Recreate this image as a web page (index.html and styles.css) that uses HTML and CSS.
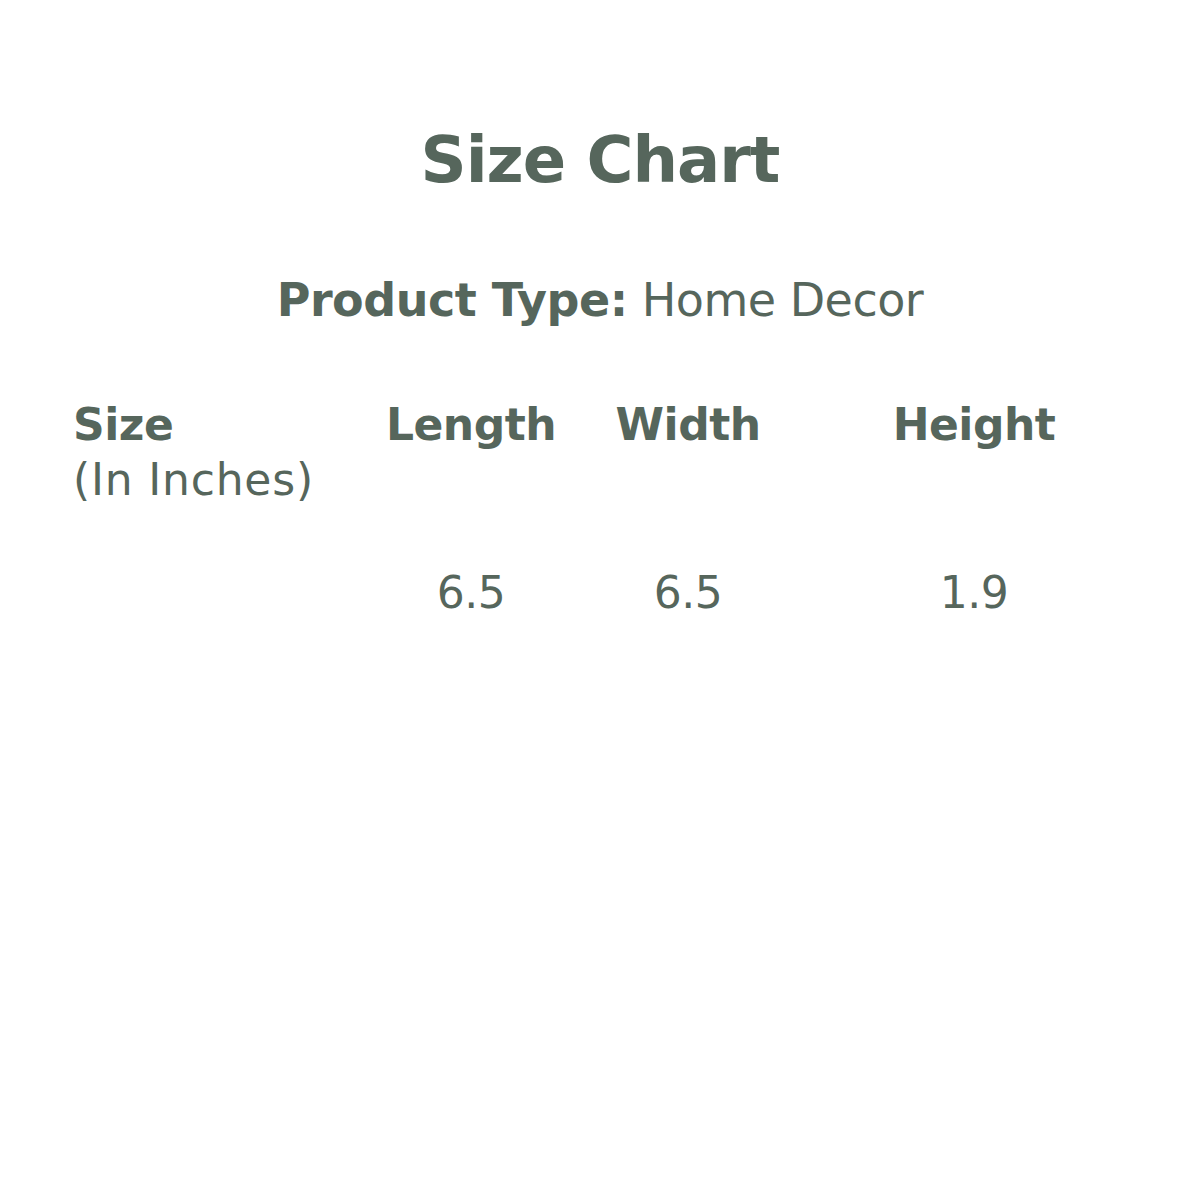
FILE: index.html
```html
<!DOCTYPE html>
<html>
<head>
<meta charset="utf-8">
<link rel="stylesheet" href="styles.css">
</head>
<body>
<main class="page">
  <h1 class="title">Size Chart</h1>
  <p class="type"><strong>Product Type:</strong> Home Decor</p>
  <div class="chart">
    <div class="cell first"><strong>Size</strong><br><span class="unit">(In Inches)</span></div>
    <div class="cell"><strong>Length</strong></div>
    <div class="cell"><strong>Width</strong></div>
    <div class="cell"><strong>Height</strong></div>
    <div class="cell first val"></div>
    <div class="cell val">6.5</div>
    <div class="cell val">6.5</div>
    <div class="cell val">1.9</div>
  </div>
</main>
</body>
</html>
```
FILE: styles.css
```css
html, body {
  margin: 0;
  padding: 0;
  background: #ffffff;
}
body {
  width: 1200px;
  height: 1200px;
  font-family: "DejaVu Sans", sans-serif;
  color: #56665c;
}
.page {
  display: flex;
  flex-direction: column;
  align-items: center;
  padding-top: 122px;
}
.title {
  margin: 0;
  font-size: 64px;
  font-weight: 700;
  line-height: 76px;
  letter-spacing: -1px;
}
.type {
  margin: 76px 0 0;
  font-size: 46px;
  line-height: 52px;
  font-weight: 400;
  letter-spacing: -0.5px;
}
.type strong {
  font-weight: 700;
}
.chart {
  align-self: stretch;
  margin: 71px 0 0 73px;
  display: grid;
  grid-template-columns: 291px 214px 220px 352px;
  font-size: 44px;
  line-height: 55px;
  letter-spacing: -0.5px;
}
.cell {
  text-align: center;
}
.cell.first {
  text-align: left;
}
.unit {
  letter-spacing: 0.8px;
}
.val {
  padding-top: 58px;
}
```
